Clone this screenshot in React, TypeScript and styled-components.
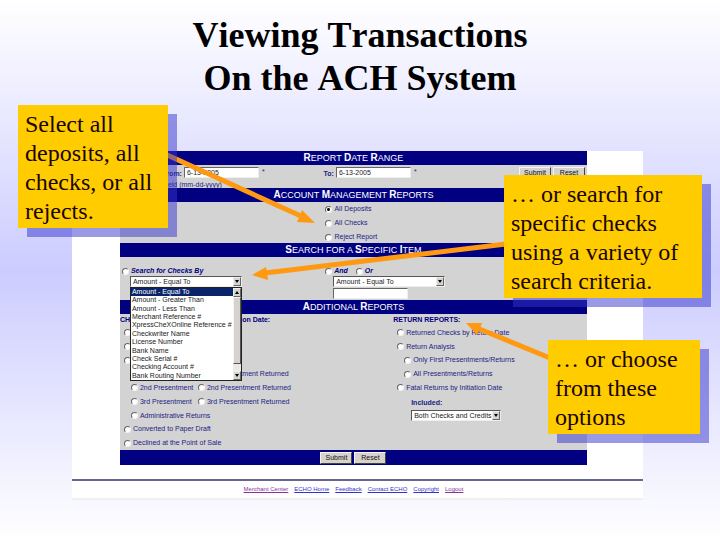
import React, { Fragment, useId } from "react";
import styled, { createGlobalStyle, css } from "styled-components";

const GlobalStyle = createGlobalStyle`
  * { box-sizing: border-box; }
  body { margin: 0; }
  input, button, select { font: inherit; margin: 0; border-radius: 0; }
`;

const navy = "#000080";
const ink = "#1c1c84";
const sans = '"Liberation Sans", Arial, sans-serif';
const serif = '"Liberation Serif", "Times New Roman", serif';

const Slide = styled.main`
  position: relative;
  min-height: 100vh;
  padding-bottom: 40px;
  background: linear-gradient(#ffffff, #ccccff 50%, #ffffff);
`;

const Title = styled.h1`
  margin: 0;
  padding-top: 14px;
  height: 151px;
  font: bold 36px/43px ${serif};
  font-kerning: none;
  color: #000;
  text-align: center;
`;

const Panel = styled.section`
  margin-left: 10%;
  width: 79.3%;
  background: #fff;
  border-bottom: 2px solid #f0f0f0;
  font: 7px/10px ${sans};
  color: ${ink};
`;

const Form = styled.form`
  margin: 0 9.8% 0 8.4%;
  background: #d3d3d3;
`;

const Bar = styled.h2`
  margin: 0;
  height: 14px;
  background: ${navy};
  color: #fff;
  font: 9px/14px ${sans};
  text-align: center;
  text-transform: uppercase;
`;

const Cap = styled.span`
  font-size: 10px;
  font-weight: bold;
`;

const DateRow = styled.div`
  display: grid;
  grid-template-columns: 62px 136px 12px 1fr auto;
  height: 23px;
  padding: 2px 2px 0 0;
  column-gap: 2px;
`;

const FieldLabel = styled.label`
  font-weight: bold;
  text-align: right;
  line-height: 13px;
`;

const Field = styled.div`
  display: flex;
  gap: 3px;
  line-height: 9px;
`;

const TextBox = styled.input`
  display: block;
  width: 75px;
  height: 11px;
  padding: 0 2px;
  border: 1px solid #eee;
  border-top-color: #666;
  border-left-color: #666;
  background: #fff;
  color: #222;
  line-height: 9px;
`;

const Hint = styled.div`
  grid-column: 1 / 3;
  width: 102px;
  line-height: 9px;
  text-align: right;
  white-space: nowrap;
`;

const Buttons = styled.div`
  display: flex;
  justify-content: center;
  gap: 2px;
`;

const PushButton = styled.button`
  width: 32px;
  height: 12px;
  padding: 0;
  border: 1px solid #f4f4f0;
  border-right-color: #444;
  border-bottom-color: #444;
  background: #d6d3ce;
  color: #111;
  line-height: 10px;
`;

const AccountList = styled.div`
  display: grid;
  grid-template-rows: repeat(3, 14px);
  height: 41px;
  padding-left: 44%;
`;

const Choice = styled.label<{ $strong?: boolean }>`
  display: flex;
  align-items: center;
  gap: 2px;
  white-space: nowrap;
  ${(p) => p.$strong && css`font-weight: bold; font-style: italic; color: ${navy};`}
`;

const Radio = styled.input`
  appearance: none;
  flex: none;
  width: 7px;
  height: 7px;
  border: 1px solid #f2f2f2;
  border-top-color: #666;
  border-left-color: #666;
  border-radius: 50%;
  background: #fff;
  &:checked { background: radial-gradient(#111 0 1px, #fff 2px); }
`;

const SearchRow = styled.div`
  display: grid;
  grid-template-columns: 43.7% 1fr;
  height: 43px;
  padding: 9px 0 0 2px;
`;

const ChoiceLine = styled.div`
  display: flex;
  gap: 8px;
`;

const Controls = styled.div`
  position: relative;
  width: 113px;
  margin-left: 8px;
`;

const SelectBox = styled.span<{ $width: number }>`
  display: flex;
  width: ${(p) => p.$width}px;
  height: 11px;
  margin-bottom: 1px;
  border: 1px solid #eee;
  border-top-color: #555;
  border-left-color: #555;
  background: #fff;
`;

const SelectField = styled.select`
  appearance: none;
  flex: 1;
  min-width: 0;
  padding: 0 0 0 2px;
  border: 0;
  background: transparent;
  color: #222;
  line-height: 9px;
`;

const ArrowKey = styled.span`
  display: flex;
  flex: none;
  align-items: center;
  justify-content: center;
  width: 8px;
  height: 9px;
  border: 1px solid #eee;
  border-right-color: #666;
  border-bottom-color: #666;
  background: #d6d3ce;
`;

const Popup = styled.div`
  position: absolute;
  z-index: 1;
  top: 11px;
  left: 0;
  display: flex;
  width: 112px;
  height: 94px;
  border: 1px solid #222;
  background: #fff;
  color: #222;
`;

const OptionList = styled.ul`
  flex: 1;
  display: grid;
  grid-template-rows: repeat(11, 1fr);
  margin: 0;
  padding: 0;
  list-style: none;
  line-height: 8px;
  white-space: nowrap;
`;

const Option = styled.li<{ $active: boolean }>`
  padding-left: 1px;
  ${(p) => p.$active && css`background: #0a246a; color: #fff;`}
`;

const ScrollTrack = styled.div`
  display: flex;
  flex-direction: column;
  width: 8px;
  background: #eceae6;
`;

const ScrollThumb = styled.div`
  height: 67px;
  margin-bottom: auto;
  border: 1px solid #f4f4f0;
  border-right-color: #555;
  border-bottom-color: #555;
  background: #d6d3ce;
`;

const ReportColumns = styled.div`
  display: grid;
  grid-template-columns: 58.5% 1fr;
  height: 136px;
`;

const ReportColumn = styled.div`
  display: grid;
  grid-template-rows: 12px repeat(9, 1fr);
  align-items: center;
`;

const ReportTitle = styled.h3`
  margin: 0;
  font: bold 7px/10px ${sans};
  color: ${navy};
`;

const ReportRow = styled.div<{ $level: number }>`
  display: grid;
  grid-template-columns: 67px 1fr;
  padding-left: ${(p) => (p.$level === 2 ? 11 : 4)}px;
`;

const Included = styled.div`
  grid-row: span 2;
  padding-left: 18px;
`;

const IncludedLabel = styled.label`
  display: block;
  font-weight: bold;
  line-height: 14px;
`;

const FooterBar = styled.div`
  height: 15px;
  padding-top: 2px;
  background: ${navy};
`;

const Links = styled.nav`
  display: flex;
  justify-content: center;
  gap: 6px;
  height: 19px;
  margin-top: 14px;
  padding: 3px 8px 0 0;
  border-top: 2px solid #666690;
  font-size: 6px;
`;

const PageLink = styled.a<{ $visited: boolean }>`
  color: ${(p) => (p.$visited ? "#883399" : "#3333cc")};
  text-decoration: underline;
`;

const Arrows = styled.svg`
  position: absolute;
  z-index: 2;
  top: 0;
  left: 0;
  width: 100%;
  height: 540px;
  pointer-events: none;
`;

const Note = styled.aside<{ $left: string; $top: number; $width: string }>`
  position: absolute;
  z-index: 3;
  left: ${(p) => p.$left};
  top: ${(p) => p.$top}px;
  width: ${(p) => p.$width};
  padding: 5px 0 2px 7px;
  background: #ffcc00;
  box-shadow: 9px 9px 0 rgba(51, 51, 204, 0.5);
  color: #1a0500;
  font: 24px/29px ${serif};
  white-space: pre-line;
`;

function Heading({ text }: { text: string }) {
  return (
    <Bar>
      {text.split(" ").map((word, i) => (
        <Fragment key={i}>
          {i > 0 && " "}
          {/^[A-Z]/.test(word) ? <><Cap>{word[0]}</Cap>{word.slice(1)}</> : word}
        </Fragment>
      ))}
    </Bar>
  );
}

function Pick({ group, text, name, strong, on }: { group: string; text?: string; name?: string; strong?: boolean; on?: boolean }) {
  return (
    <Choice $strong={strong}>
      <Radio type="radio" name={group} aria-label={name} defaultChecked={on} />
      {text}
    </Choice>
  );
}

function Triangle({ up }: { up?: boolean }) {
  return (
    <svg width="4" height="3" viewBox="0 0 4 3" aria-hidden="true">
      <path d={up ? "M0 3h4L2 0z" : "M0 0h4L2 3z"} fill="#000" />
    </svg>
  );
}

function DropDown({ id, label, width, options }: { id?: string; label?: string; width: number; options: string[] }) {
  return (
    <SelectBox $width={width}>
      <SelectField id={id} aria-label={label}>
        {options.map((o) => <option key={o}>{o}</option>)}
      </SelectField>
      <ArrowKey><Triangle /></ArrowKey>
    </SelectBox>
  );
}

const criteria = [
  "Amount - Equal To", "Amount - Greater Than", "Amount - Less Than", "Merchant Reference #",
  "XpressCheXOnline Reference #", "Checkwriter Name", "License Number", "Bank Name",
  "Check Serial #", "Checking Account #", "Bank Routing Number",
];

const links: [string, boolean][] = [
  ["Merchant Center", true], ["ECHO Home", false], ["Feedback", false],
  ["Contact ECHO", false], ["Copyright", false], ["Logout", true],
];

const arrows = [
  { line: "M165 154L303 217", head: "M315 223L297 222L302 210z" },
  { line: "M506 244L265 273", head: "M252 275L266 267L268 280z" },
  { line: "M550 358L477 328", head: "M466 323L482 323L477 335z" },
];

export default function App() {
  const id = useId();
  return (
    <>
      <GlobalStyle />
      <Slide>
        <Title>Viewing Transactions<br />On the ACH System</Title>
        <Panel>
          <Form onSubmit={(e) => e.preventDefault()}>
            <Heading text="Report Date Range" />
            <DateRow>
              <FieldLabel htmlFor={id + "from"}>From:</FieldLabel>
              <Field><TextBox id={id + "from"} defaultValue="6-13-2005" />*</Field>
              <FieldLabel htmlFor={id + "to"}>To:</FieldLabel>
              <Field><TextBox id={id + "to"} defaultValue="6-13-2005" />*</Field>
              <Buttons>
                <PushButton type="submit">Submit</PushButton>
                <PushButton type="reset">Reset</PushButton>
              </Buttons>
              <Hint>* Required field (mm-dd-yyyy)</Hint>
            </DateRow>

            <Heading text="Account Management Reports" />
            <AccountList>
              <Pick group="report" text="All Deposits" on />
              <Pick group="report" text="All Checks" />
              <Pick group="report" text="Reject Report" />
            </AccountList>

            <Heading text="Search for a Specific Item" />
            <SearchRow>
              <div>
                <ChoiceLine><Pick group="report" text="Search for Checks By" strong /></ChoiceLine>
                <Controls>
                  <DropDown label="Search criterion" width={112} options={criteria} />
                  <Popup>
                    <OptionList role="listbox" aria-label="Search criteria">
                      {criteria.map((c, i) => (
                        <Option key={c} role="option" aria-selected={i === 0} $active={i === 0}>{c}</Option>
                      ))}
                    </OptionList>
                    <ScrollTrack>
                      <ArrowKey><Triangle up /></ArrowKey>
                      <ScrollThumb />
                      <ArrowKey><Triangle /></ArrowKey>
                    </ScrollTrack>
                  </Popup>
                </Controls>
              </div>
              <div>
                <ChoiceLine>
                  <Pick group="join" text="And" strong />
                  <Pick group="join" text="Or" strong />
                </ChoiceLine>
                <Controls>
                  <DropDown label="Second criterion" width={112} options={criteria} />
                  <TextBox aria-label="Second value" />
                </Controls>
              </div>
            </SearchRow>

            <Heading text="Additional Reports" />
            <ReportColumns>
              <ReportColumn>
                <ReportTitle>CHECK STATUS REPORTS by Initiation Date:</ReportTitle>
                <ReportRow $level={1}><Pick group="report" name="Initiated" /></ReportRow>
                <ReportRow $level={1}><Pick group="report" name="Settled" /></ReportRow>
                <ReportRow $level={1}><Pick group="report" name="Presented" /></ReportRow>
                <ReportRow $level={2}>
                  <Pick group="report" name="1st Presentment" />
                  <Pick group="report" text="1st Presentment Returned" />
                </ReportRow>
                {["2nd", "3rd"].map((n) => (
                  <ReportRow key={n} $level={2}>
                    <Pick group="report" text={n + " Presentment"} />
                    <Pick group="report" text={n + " Presentment Returned"} />
                  </ReportRow>
                ))}
                <ReportRow $level={2}><Pick group="report" text="Administrative Returns" /></ReportRow>
                <ReportRow $level={1}><Pick group="report" text="Converted to Paper Draft" /></ReportRow>
                <ReportRow $level={1}><Pick group="report" text="Declined at the Point of Sale" /></ReportRow>
              </ReportColumn>
              <ReportColumn>
                <ReportTitle>RETURN REPORTS:</ReportTitle>
                <ReportRow $level={1}><Pick group="report" text="Returned Checks by Return Date" /></ReportRow>
                <ReportRow $level={1}><Pick group="report" text="Return Analysis" /></ReportRow>
                <ReportRow $level={2}><Pick group="report" text="Only First Presentments/Returns" /></ReportRow>
                <ReportRow $level={2}><Pick group="report" text="All Presentments/Returns" /></ReportRow>
                <ReportRow $level={1}><Pick group="report" text="Fatal Returns by Initiation Date" /></ReportRow>
                <Included>
                  <IncludedLabel htmlFor={id + "inc"}>Included:</IncludedLabel>
                  <DropDown id={id + "inc"} width={90} options={["Both Checks and Credits"]} />
                </Included>
              </ReportColumn>
            </ReportColumns>

            <FooterBar>
              <Buttons>
                <PushButton type="submit">Submit</PushButton>
                <PushButton type="reset">Reset</PushButton>
              </Buttons>
            </FooterBar>
          </Form>
          <Links>
            {links.map(([text, visited]) => (
              <PageLink key={text} href="#" $visited={visited}>{text}</PageLink>
            ))}
          </Links>
        </Panel>

        <Arrows viewBox="0 0 720 540" preserveAspectRatio="none" aria-hidden="true">
          {arrows.map((a) => (
            <g key={a.line}>
              <path d={a.line} stroke="#ff9911" strokeWidth="5" fill="none" />
              <path d={a.head} fill="#ff9911" />
            </g>
          ))}
        </Arrows>

        <Note $left="2.5%" $top={105} $width="20.8%">{"Select all\ndeposits, all\nchecks, or all\nrejects."}</Note>
        <Note $left="70%" $top={175} $width="27.5%">{"… or search for\nspecific checks\nusing a variety of\nsearch criteria."}</Note>
        <Note $left="76.1%" $top={340} $width="21.1%">{"… or choose\nfrom these\noptions"}</Note>
      </Slide>
    </>
  );
}
